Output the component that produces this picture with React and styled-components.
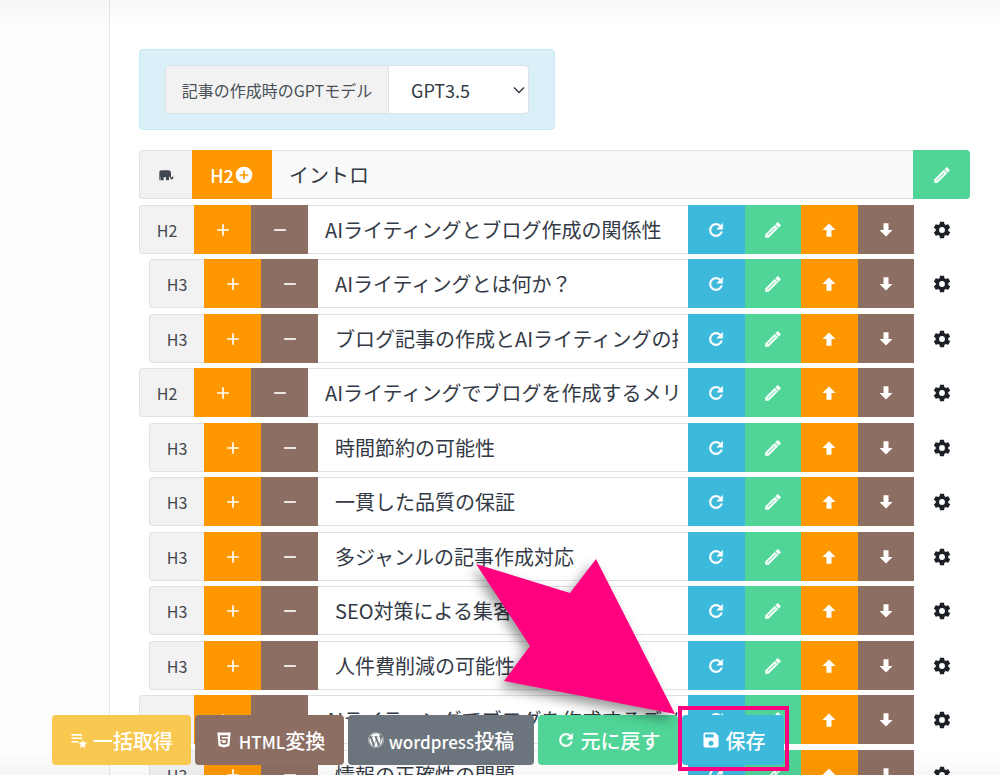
import React from "react";
import styled, { createGlobalStyle } from "styled-components";
import { FaWordpress } from "react-icons/fa";

const colors = {
  orange: "#ff9800",
  brown: "#8d6e63",
  blue: "#3db9dc",
  green: "#50d497",
  yellow: "#f9c851",
  gray: "#6c757d",
  pink: "#ff007f",
  border: "#dee2e6",
  addon: "#f2f2f2",
  text: "#343a45",
};

const GlobalStyle = createGlobalStyle`
  *, *::before, *::after { box-sizing: border-box; }
  body {
    margin: 0;
    background: #fff;
    color: ${colors.text};
    font-family: "Noto Sans CJK JP", sans-serif;
    font-size: 16px;
  }
  button, input, select { font: inherit; color: inherit; }
`;

const Page = styled.div`
  position: relative;
  display: flex;
  height: 100vh;
  overflow: hidden;
`;

const TopShade = styled.div`
  position: absolute;
  inset: 0 0 auto 0;
  height: 28px;
  background: linear-gradient(rgba(60, 60, 110, 0.04), rgba(60, 60, 110, 0));
`;

const Sidebar = styled.aside`
  flex: 0 0 110px;
  background: #fdfdfd;
  border-right: 1px solid #e7e8eb;
`;

const Main = styled.main`
  flex: 1;
  min-width: 0;
  padding: 49px 30px 0 29px;
`;

const ModelPanel = styled.section`
  width: 416px;
  padding: 15px 25px;
  margin-bottom: 20px;
  background: #d9f0f8;
  border: 1px solid #c4eaf3;
  border-radius: 4px;
`;

const ModelGroup = styled.div`
  display: flex;
  height: 49px;
  background: #fff;
  border: 1px solid ${colors.border};
  border-radius: 4px;
  overflow: hidden;
`;

const ModelLabel = styled.label`
  display: flex;
  align-items: center;
  justify-content: center;
  flex: 0 0 223px;
  background: ${colors.addon};
  border-right: 1px solid ${colors.border};
  color: #495057;
  white-space: nowrap;
`;

const SelectWrap = styled.div`
  position: relative;
  flex: 1;
  display: flex;
`;

const ModelSelect = styled.select`
  flex: 1;
  appearance: none;
  border: 0;
  padding: 0 22px;
  background: transparent;
  font-size: 18px;
`;

const Chevron = styled.svg`
  position: absolute;
  right: 2px;
  top: 17px;
  width: 14px;
  height: 14px;
  pointer-events: none;
`;

const RowList = styled.ul`
  list-style: none;
  margin: 0;
  padding: 0;
`;

const Row = styled.li`
  display: flex;
  height: 49px;
  margin-bottom: 5px;
  padding-left: ${(p) => (p.$nested ? 10 : 0)}px;
  &:nth-child(odd) { margin-bottom: 6px; }
`;

const Addon = styled.span`
  display: flex;
  align-items: center;
  justify-content: center;
  flex: 0 0 ${(p) => p.$width}px;
  background: ${colors.addon};
  border: 1px solid ${colors.border};
  border-right: 0;
  border-radius: 4px 0 0 4px;
  color: #41474f;
`;

const ButtonGroup = styled.div`
  display: flex;
  flex: 0 0 ${(p) => p.$width}px;
`;

const ToolButton = styled.button`
  display: flex;
  align-items: center;
  justify-content: center;
  flex: 1;
  padding: 0;
  border: 0;
  border-radius: ${(p) => (p.$last ? "0 4px 4px 0" : "0")};
  background: ${(p) => colors[p.$color]};
  color: #fff;
  font-size: 18px;
  font-weight: 500;
`;

const GearButton = styled.button`
  display: flex;
  align-items: center;
  justify-content: center;
  flex: 0 0 56px;
  padding: 0;
  border: 0;
  background: none;
  color: #1d2026;
`;

const TitleInput = styled.input`
  flex: 1;
  min-width: 0;
  padding: 0 10px 0 17px;
  border: solid ${colors.border};
  border-width: 1px 0;
  border-radius: 0;
  background: ${(p) => (p.readOnly ? "#f9f9f9" : "#fff")};
  font-size: 20px;
`;

const BottomBar = styled.footer`
  position: absolute;
  left: 0;
  right: 0;
  bottom: 0;
  display: flex;
  gap: 4px;
  padding: 0 52px 10px;
  background: linear-gradient(rgba(0, 0, 0, 0) 60%, rgba(0, 0, 0, 0.03));
`;

const BarItem = styled.div`
  position: relative;
  display: flex;
  flex: 0 0 ${(p) => p.$width}px;
`;

const BarButton = styled.button`
  display: flex;
  align-items: center;
  justify-content: center;
  gap: 5px;
  flex: 1;
  height: 50px;
  padding: 0;
  border: 0;
  border-radius: 4px;
  background: ${(p) => colors[p.$color]};
  color: #fff;
  font-size: 20px;
  font-weight: 500;
  white-space: nowrap;
`;

const Latin = styled.span`
  font-size: 17px;
`;

const Highlight = styled.span`
  position: absolute;
  inset: -9px -5px -6px -4px;
  border: 4px solid ${colors.pink};
  pointer-events: none;
`;

const Pointer = styled.svg`
  position: absolute;
  left: 456px;
  bottom: 41px;
  width: 240px;
  height: 195px;
  pointer-events: none;
  filter: drop-shadow(-4px 6px 6px rgba(0, 0, 0, 0.4));
`;

const paths = {
  plus: "M19,13H13V19H11V13H5V11H11V5H13V11H19V13Z",
  minus: "M19,13H5V11H19V13Z",
  refresh:
    "M17.65,6.35C16.2,4.9 14.21,4 12,4A8,8 0 0,0 4,12A8,8 0 0,0 12,20C15.73,20 18.84,17.45 19.73,14H17.65C16.83,16.33 14.61,18 12,18A6,6 0 0,1 6,12A6,6 0 0,1 12,6C13.66,6 15.14,6.69 16.22,7.78L13,11H20V4L17.65,6.35Z",
  pencil:
    "M14.06,9L15,9.94L5.92,19H5V18.08L14.06,9M17.66,3C17.41,3 17.15,3.1 16.96,3.29L15.13,5.12L18.88,8.87L20.71,7.04C21.1,6.65 21.1,6 20.71,5.63L18.37,3.29C18.17,3.09 17.92,3 17.66,3M14.06,6.19L3,17.25V21H6.75L17.81,9.94L14.06,6.19Z",
  up: "M15,20H9V12H4.16L12,4.16L19.84,12H15V20Z",
  down: "M9,4H15V12H19.84L12,19.84L4.16,12H9V4Z",
  plusCircle:
    "M17,13H13V17H11V13H7V11H11V7H13V11H17M12,2A10,10 0 0,0 2,12A10,10 0 0,0 12,22A10,10 0 0,0 22,12A10,10 0 0,0 12,2Z",
  cog: "M12,15.5A3.5,3.5 0 0,1 8.5,12A3.5,3.5 0 0,1 12,8.5A3.5,3.5 0 0,1 15.5,12A3.5,3.5 0 0,1 12,15.5M19.43,12.97C19.47,12.65 19.5,12.33 19.5,12C19.5,11.67 19.47,11.34 19.43,11L21.54,9.37C21.73,9.22 21.78,8.95 21.66,8.73L19.66,5.27C19.54,5.05 19.27,4.96 19.05,5.05L16.56,6.05C16.04,5.66 15.5,5.32 14.87,5.07L14.5,2.42C14.46,2.18 14.25,2 14,2H10C9.75,2 9.54,2.18 9.5,2.42L9.13,5.07C8.5,5.32 7.96,5.66 7.44,6.05L4.95,5.05C4.73,4.96 4.46,5.05 4.34,5.27L2.34,8.73C2.21,8.95 2.27,9.22 2.46,9.37L4.57,11C4.53,11.34 4.5,11.67 4.5,12C4.5,12.33 4.53,12.65 4.57,12.97L2.46,14.63C2.27,14.78 2.21,15.05 2.34,15.27L4.34,18.73C4.46,18.95 4.73,19.03 4.95,18.95L7.44,17.94C7.96,18.34 8.5,18.68 9.13,18.93L9.5,21.58C9.54,21.82 9.75,22 10,22H14C14.25,22 14.46,21.82 14.5,21.58L14.87,18.93C15.5,18.67 16.04,18.34 16.56,17.94L19.05,18.95C19.27,19.03 19.54,18.95 19.66,18.73L21.66,15.27C21.78,15.05 21.73,14.78 21.54,14.63L19.43,12.97Z",
  elephant:
    "M5,5H15C18,5 19.5,7 19.5,9.5V15.5C19.5,16.4 21,16.4 21,15.5V14.5H23V16C23,19 18,19 18,16V14.5H16.5V20H12V15.5H8.5V20H4V14.5H3.5V20H2V8.5C2,6.3 3.2,5 5,5Z",
  playlist:
    "M2,4H16V6.2H2ZM2,8.6H16V10.8H2ZM2,13.2H11V15.4H2ZM17,11.5L18.6,15.4L22.8,15.8L19.6,18.6L20.6,22.7L17,20.5L13.4,22.7L14.4,18.6L11.2,15.8L15.4,15.4Z",
  html5:
    "M12,17.56L16.07,16.43L16.62,10.33H9.38L9.2,8.3H16.8L17,6.31H7L7.56,12.32H14.45L14.22,14.9L12,15.5L9.78,14.9L9.64,13.24H7.64L7.93,16.43L12,17.56M4.07,3H19.93L18.5,19.2L12,21L5.5,19.2L4.07,3Z",
  save: "M15,9H5V5H15M12,19A3,3 0 0,1 9,16A3,3 0 0,1 12,13A3,3 0 0,1 15,16A3,3 0 0,1 12,19M17,3H5C3.89,3 3,3.9 3,5V19A2,2 0 0,0 5,21H19A2,2 0 0,0 21,19V7L17,3Z",
};

function Icon({ name, size = 20, weight = 0 }) {
  return (
    <svg width={size} height={size} viewBox="0 0 24 24" fill="currentColor" stroke="currentColor" strokeWidth={weight} aria-hidden="true">
      <path fillRule="evenodd" d={paths[name]} />
    </svg>
  );
}

const rows = [
  { level: "H2", title: "AIライティングとブログ作成の関係性" },
  { level: "H3", title: "AIライティングとは何か？" },
  { level: "H3", title: "ブログ記事の作成とAIライティングの技術" },
  { level: "H2", title: "AIライティングでブログを作成するメリット" },
  { level: "H3", title: "時間節約の可能性" },
  { level: "H3", title: "一貫した品質の保証" },
  { level: "H3", title: "多ジャンルの記事作成対応" },
  { level: "H3", title: "SEO対策による集客力" },
  { level: "H3", title: "人件費削減の可能性" },
  { level: "H2", title: "AIライティングでブログを作成するデメリット" },
  { level: "H3", title: "情報の正確性の問題" },
];

function HeadingRow({ level, title }) {
  return (
    <Row $nested={level === "H3"}>
      <Addon $width={55}>{level}</Addon>
      <ButtonGroup $width={114}>
        <ToolButton $color="orange" aria-label="追加"><Icon name="plus" /></ToolButton>
        <ToolButton $color="brown" aria-label="削除"><Icon name="minus" /></ToolButton>
      </ButtonGroup>
      <TitleInput aria-label={level} defaultValue={title} />
      <ButtonGroup $width={226}>
        <ToolButton $color="blue" aria-label="再生成"><Icon name="refresh" weight={0.6} /></ToolButton>
        <ToolButton $color="green" aria-label="編集"><Icon name="pencil" weight={0.6} /></ToolButton>
        <ToolButton $color="orange" aria-label="上へ"><Icon name="up" /></ToolButton>
        <ToolButton $color="brown" aria-label="下へ"><Icon name="down" /></ToolButton>
      </ButtonGroup>
      <GearButton aria-label="設定"><Icon name="cog" /></GearButton>
    </Row>
  );
}

export default function App() {
  return (
    <Page>
      <GlobalStyle />
      <Sidebar />
      <Main>
        <ModelPanel>
          <ModelGroup>
            <ModelLabel htmlFor="model">記事の作成時のGPTモデル</ModelLabel>
            <SelectWrap>
              <ModelSelect id="model" defaultValue="GPT3.5">
                <option>GPT3.5</option>
              </ModelSelect>
              <Chevron viewBox="0 0 14 14" fill="none" stroke={colors.text} strokeWidth="1.5">
                <path d="M2 4.5L7 9.5L12 4.5" />
              </Chevron>
            </SelectWrap>
          </ModelGroup>
        </ModelPanel>
        <RowList>
          <Row>
            <Addon $width={53}><Icon name="elephant" size={16} /></Addon>
            <ButtonGroup $width={80}>
              <ToolButton $color="orange">H2<Icon name="plusCircle" /></ToolButton>
            </ButtonGroup>
            <TitleInput aria-label="イントロ" value="イントロ" readOnly />
            <ButtonGroup $width={57}>
              <ToolButton $color="green" $last aria-label="編集"><Icon name="pencil" weight={0.6} /></ToolButton>
            </ButtonGroup>
          </Row>
          {rows.map((row) => <HeadingRow key={row.title} {...row} />)}
        </RowList>
      </Main>
      <TopShade />
      <BottomBar>
        <BarItem $width={139}>
          <BarButton $color="yellow"><Icon name="playlist" size={18} />一括取得</BarButton>
        </BarItem>
        <BarItem $width={149}>
          <BarButton $color="brown"><Icon name="html5" size={20} /><span><Latin>HTML</Latin>変換</span></BarButton>
        </BarItem>
        <BarItem $width={186}>
          <BarButton $color="gray"><FaWordpress size={16} /><span><Latin>wordpress</Latin>投稿</span></BarButton>
        </BarItem>
        <BarItem $width={140}>
          <BarButton $color="green"><Icon name="refresh" size={20} weight={0.6} />元に戻す</BarButton>
        </BarItem>
        <BarItem $width={102}>
          <BarButton $color="blue"><Icon name="save" size={20} />保存</BarButton>
          <Highlight />
        </BarItem>
        <Pointer viewBox="0 0 240 195" aria-hidden="true">
          <path d="M20 25L114 54L140 20L219 175L48 142L74 107Z" fill={colors.pink} />
        </Pointer>
      </BottomBar>
    </Page>
  );
}
